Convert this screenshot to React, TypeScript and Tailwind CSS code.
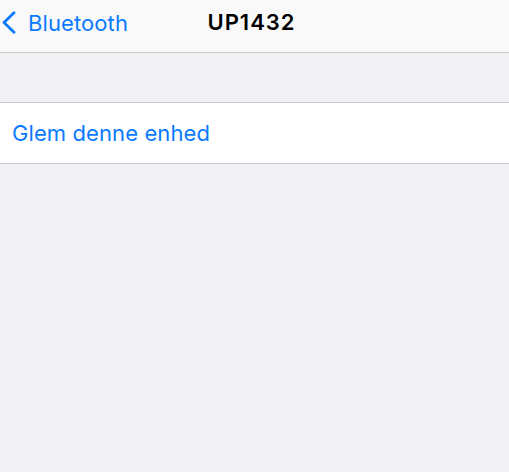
export default function App() {
  return (
    <div className="w-[509px] h-[472px] bg-[#f0f0f5] font-['Inter','Liberation_Sans',sans-serif] overflow-hidden">
      <div className="relative h-[53px] bg-[#f9f9f9] border-b border-[#c8c7cc] flex items-start pt-[11px]">
        <div className="flex items-center pl-[2px] text-[#0a7aff]">
          <svg width="14" height="23" viewBox="0 0 14 23" className="mr-[12px]">
            <path d="M12 1.8 L2 11.5 L12 21.2" fill="none" stroke="currentColor" strokeWidth="2.8" strokeLinecap="round" strokeLinejoin="round" />
          </svg>
          <span className="text-[22px] leading-none tracking-[0.1px]">Bluetooth</span>
        </div>
        <div className="absolute inset-x-0 top-0 h-[44px] flex items-center justify-center pointer-events-none">
          <span className="text-[22px] font-semibold text-black leading-none tracking-[1px] pr-[6px]">UP1432</span>
        </div>
      </div>
      <div className="h-[49px]" />
      <div className="h-[62px] bg-white border-y border-[#c8c7cc] flex items-center pl-[12px]">
        <span className="text-[22px] text-[#0a7aff] leading-none tracking-[0.1px]">Glem denne enhed</span>
      </div>
    </div>
  );
}
